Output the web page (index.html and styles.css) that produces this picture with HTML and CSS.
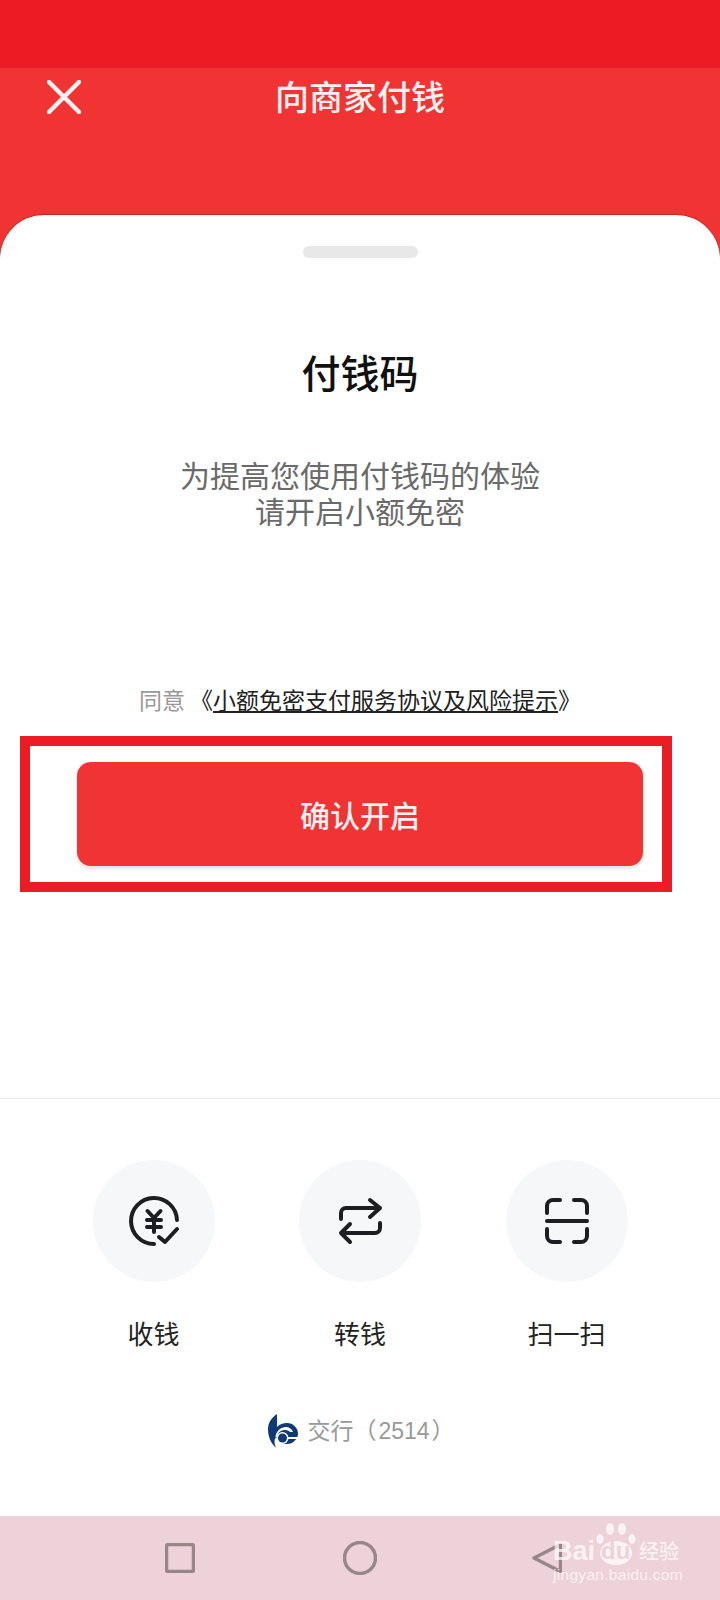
FILE: index.html
```html
<!doctype html>
<html lang="zh-CN">
  <head>
    <meta charset="utf-8">
    <title>向商家付钱</title>
    <link rel="stylesheet" href="styles.css">
  </head>
  <body>
    <div class="status-bar"></div>
    <header class="top-bar">
      <svg class="close-icon" width="34" height="34" viewBox="0 0 34 34">
        <path d="M2 2L32 32M32 2L2 32"/>
      </svg>
      <h1 class="top-title">向商家付钱</h1>
    </header>
    <main class="card">
      <div class="handle"></div>
      <h2 class="card-title">付钱码</h2>
      <p class="card-desc">为提高您使用付钱码的体验<br>请开启小额免密</p>
      <p class="agree">同意 <span class="agree-link">《<u>小额免密支付服务协议及风险提示</u>》</span></p>
      <div class="highlight">
        <button class="confirm" type="button">确认开启</button>
      </div>
      <section class="footer">
        <div class="actions">
          <div class="action">
            <div class="action-circle">
              <svg class="action-icon" width="60" height="60" viewBox="0 0 60 60">
                <path d="M53 29A23 23 0 1 0 30 53"/>
                <path d="M35 46L41 51L53 38"/>
                <path d="M23.500 20L30 27L36.500 20M23 29H37M23 36H37M30 27V41"/>
              </svg>
            </div>
            <span class="action-label">收钱</span>
          </div>
          <div class="action">
            <div class="action-circle">
              <svg class="action-icon" width="60" height="60" viewBox="0 0 60 60">
                <path d="M11 28V22a5 5 0 0 1 5-5H50M40 9L50 17L40 26"/>
                <path d="M50 32V37a5 5 0 0 1-5 5H11M20 33L11 42L20 51"/>
              </svg>
            </div>
            <span class="action-label">转钱</span>
          </div>
          <div class="action">
            <div class="action-circle">
              <svg class="action-icon" width="60" height="60" viewBox="0 0 60 60">
                <path d="M10 22V15a6 6 0 0 1 6-6H23M37 9H44a6 6 0 0 1 6 6V22"/>
                <path d="M10 38V45a6 6 0 0 0 6 6H23M37 51H44a6 6 0 0 0 6-6V38"/>
                <path d="M10 30H50"/>
              </svg>
            </div>
            <span class="action-label">扫一扫</span>
          </div>
        </div>
        <div class="bank">
          <svg class="bank-logo" width="30" height="34" viewBox="0 0 30 34">
            <path class="bank-blue" d="M9 0C3 4 0 9 0 15C0 23 3 29 8 34C6 29 6 26 8 23C10 28 14 30 19 30C25 30 30 25 30 19.500C30 14 25 9 19 9C15 9 12 10 9 13Z"/>
            <path class="bank-white" d="M7.500 23C8 17 13 13 18 13C21 13 24 15 25 18L22 18C21 17 20 16 17 16C13 16 10 18 9 23Z"/>
            <rect class="bank-white" x="17" y="23" width="13" height="2"/>
            <circle class="bank-white" cx="14.500" cy="24" r="6"/>
            <circle class="bank-blue" cx="14.500" cy="24" r="4.500"/>
          </svg>
          <span class="bank-name">交行（<span class="bank-digits">2514</span>）</span>
        </div>
      </section>
    </main>
    <nav class="nav-bar">
      <svg class="nav-icon" width="30" height="30" viewBox="0 0 30 30">
        <rect x="1.500" y="1.500" width="27" height="27" rx="2"/>
      </svg>
      <svg class="nav-icon" width="34" height="34" viewBox="0 0 34 34">
        <circle cx="17" cy="17" r="15.500"/>
      </svg>
      <svg class="nav-icon nav-back" width="30" height="30" viewBox="0 0 30 30">
        <path d="M28.500 1.500L2 15L28.500 28.500Z"/>
      </svg>
      <div class="watermark">
        <div class="wm-line">
          <span>Bai</span>
          <span class="wm-paw">
            <svg width="40" height="44" viewBox="0 0 40 44">
              <ellipse cx="4" cy="17" rx="3.500" ry="5"/>
              <ellipse cx="14" cy="7" rx="4" ry="6"/>
              <ellipse cx="26" cy="7" rx="4" ry="6"/>
              <ellipse cx="36" cy="17" rx="3.500" ry="5"/>
              <ellipse cx="20" cy="31" rx="16" ry="12"/>
            </svg>
            <span class="wm-du">du</span>
          </span>
          <span class="wm-cn">经验</span>
        </div>
        <div class="wm-url">jingyan.baidu.com</div>
      </div>
    </nav>
  </body>
</html>
```

FILE: styles.css
```css
* {
  box-sizing: border-box;
}

body {
  font-family: "Noto Sans CJK SC", "Liberation Sans", sans-serif;
  background-color: #fff;
  margin: 0;
  width: 720px;
  height: 1600px;
  display: flex;
  flex-direction: column;
  overflow: hidden;
}

.status-bar {
  height: 68px;
  background-color: #ec1c24;
}

.top-bar {
  height: 191px;
  background-color: #f03434;
  display: flex;
  align-items: flex-start;
  padding: 12px 0 0 47px;
}

.close-icon {
  flex: none;
  fill: none;
  stroke: #fdf0f0;
  stroke-width: 4.500;
  stroke-linecap: round;
}

.top-title {
  margin: -2px 0 0 194px;
  color: #fdf0f0;
  font-size: 34px;
  font-weight: 500;
  line-height: 36px;
  white-space: nowrap;
}

.card {
  flex: 1;
  margin-top: -44px;
  background: white;
  border-radius: 44px 44px 0 0;
  box-shadow: 0 -1px 1px rgba(0, 0, 0, 0.2);
  display: flex;
  flex-direction: column;
  align-items: center;
  padding-top: 31px;
  position: relative;
}

.handle {
  width: 115px;
  height: 12px;
  border-radius: 6px;
  background-color: #e8e8e8;
}

.card-title {
  margin: 88px 0 0;
  color: #111;
  font-size: 39px;
  font-weight: 500;
  line-height: 50px;
}

.card-desc {
  margin: 60px 0 0;
  color: #6a6a6a;
  font-size: 30px;
  line-height: 36px;
  text-align: center;
}

.agree {
  margin: 156px 0 0;
  color: #999;
  font-size: 23px;
  line-height: 30px;
  white-space: nowrap;
}

.agree-link {
  color: #222;
}

.highlight {
  margin: 22px 28px 0 0;
  width: 652px;
  height: 156px;
  border: 10px solid #ec1c24;
  padding: 16px 19px 16px 47px;
}

.confirm {
  display: block;
  width: 100%;
  height: 104px;
  border: none;
  border-radius: 14px;
  background-color: #f03434;
  box-shadow: 0 2px 4px rgba(0, 0, 0, 0.15);
  color: #fdf0f0;
  font-family: inherit;
  font-size: 30px;
  font-weight: 500;
}

.footer {
  margin-top: 206px;
  width: 100%;
  border-top: 1px solid #ececec;
  padding-top: 61px;
}

.actions {
  display: flex;
  justify-content: center;
  gap: 84.500px;
}

.action {
  width: 122px;
  display: flex;
  flex-direction: column;
  align-items: center;
  gap: 33px;
}

.action-circle {
  width: 122px;
  height: 122px;
  border-radius: 50%;
  background-color: #f6f7f9;
  display: flex;
  align-items: center;
  justify-content: center;
}

.action-icon {
  fill: none;
  stroke: #1c1e22;
  stroke-width: 4;
  stroke-linecap: round;
  stroke-linejoin: round;
}

.action-label {
  color: #222;
  font-size: 26px;
  line-height: 36px;
  white-space: nowrap;
}

.bank {
  margin-top: 63px;
  display: flex;
  align-items: center;
  justify-content: center;
  gap: 9px;
  height: 34px;
  padding-left: 3px;
}

.bank-blue {
  fill: #103a73;
}

.bank-white {
  fill: #fff;
}

.bank-name {
  color: #999;
  font-family: "Liberation Sans", "Noto Sans CJK SC", sans-serif;
  font-size: 23px;
  line-height: 34px;
}

.bank-digits {
  margin: 0 2px;
}

.nav-bar {
  height: 84px;
  background-color: #edd2d9;
  display: flex;
  align-items: center;
  gap: 148px;
  padding-left: 165px;
  position: relative;
}

.nav-icon {
  flex: none;
  fill: none;
  stroke: #998689;
  stroke-width: 3.500;
  stroke-linejoin: round;
}

.nav-back {
  margin-left: 7px;
}

.watermark {
  position: absolute;
  left: 553px;
  top: 0;
  width: 130px;
  color: rgba(255, 255, 255, 0.72);
  font-family: "Liberation Sans", sans-serif;
}

.wm-line {
  display: flex;
  align-items: flex-end;
  height: 50px;
  font-size: 27px;
  font-weight: 700;
  line-height: 30px;
}

.wm-paw {
  position: relative;
  width: 40px;
  height: 44px;
  margin: 0 3px 0 1px;
  flex: none;
}

.wm-paw svg {
  display: block;
  fill: rgba(255, 255, 255, 0.72);
}

.wm-du {
  position: absolute;
  left: 5px;
  bottom: 2px;
  color: #edd2d9;
  font-size: 24px;
  line-height: 26px;
}

.wm-cn {
  font-family: "Noto Sans CJK SC", sans-serif;
  font-size: 20px;
  font-weight: 500;
  white-space: nowrap;
}

.wm-url {
  font-size: 15.500px;
  line-height: 18px;
  letter-spacing: 0.3px;
  white-space: nowrap;
}
```
